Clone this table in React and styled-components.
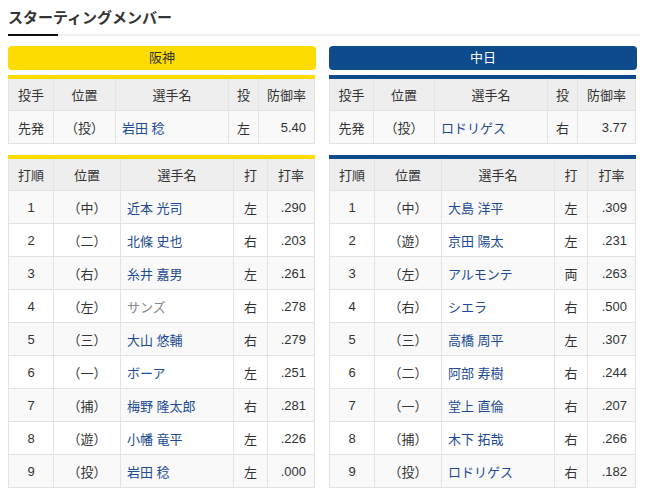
import React from "react";
import styled, { createGlobalStyle } from "styled-components";

const GlobalStyle = createGlobalStyle`
  body {
    margin: 8px;
    background: #ffffff;
    font-family: "Liberation Sans", "Noto Sans CJK JP", sans-serif;
    color: #333333;
  }
`;

const TEAMS = [
  {
    name: "阪神",
    bg: "#ffdc00",
    fg: "#333333",
    pitcher: { role: "先発", pos: "（投）", name: "岩田 稔", hand: "左", era: "5.40" },
    pitcherCols: [45, 62, 113, 30, 56],
    batterCols: [45, 67, 113, 34, 47],
    batters: [
      ["1", "（中）", "近本 光司", "左", ".290"],
      ["2", "（二）", "北條 史也", "右", ".203"],
      ["3", "（右）", "糸井 嘉男", "左", ".261"],
      ["4", "（左）", "サンズ", "右", ".278", true],
      ["5", "（三）", "大山 悠輔", "右", ".279"],
      ["6", "（一）", "ボーア", "左", ".251"],
      ["7", "（捕）", "梅野 隆太郎", "右", ".281"],
      ["8", "（遊）", "小幡 竜平", "左", ".226"],
      ["9", "（投）", "岩田 稔", "左", ".000"],
    ],
  },
  {
    name: "中日",
    bg: "#0e4b8c",
    fg: "#ffffff",
    pitcher: { role: "先発", pos: "（投）", name: "ロドリゲス", hand: "右", era: "3.77" },
    pitcherCols: [44, 61, 113, 30, 58],
    batterCols: [45, 67, 113, 33, 48],
    batters: [
      ["1", "（中）", "大島 洋平", "左", ".309"],
      ["2", "（遊）", "京田 陽太", "左", ".231"],
      ["3", "（左）", "アルモンテ", "両", ".263"],
      ["4", "（右）", "シエラ", "右", ".500"],
      ["5", "（三）", "高橋 周平", "左", ".307"],
      ["6", "（二）", "阿部 寿樹", "右", ".244"],
      ["7", "（一）", "堂上 直倫", "右", ".207"],
      ["8", "（捕）", "木下 拓哉", "右", ".266"],
      ["9", "（投）", "ロドリゲス", "右", ".182"],
    ],
  },
];

const Heading = styled.h2`
  margin: 0;
  padding: 1px 0 8px;
  font-size: 15px;
  line-height: 17px;
  font-weight: bold;
  color: #333333;
  border-bottom: 2px solid #f0f0f0;
  position: relative;

  &::after {
    content: "";
    position: absolute;
    left: 0;
    bottom: -2px;
    width: 50px;
    height: 2px;
    background: #111111;
  }
`;

const Columns = styled.div`
  display: flex;
  gap: 13px;
  margin-top: 10px;
`;

const Column = styled.div`
  width: 308px;
  display: flex;
  flex-direction: column;
`;

const TeamBar = styled.div`
  height: 24px;
  line-height: 24px;
  border-radius: 4px;
  background: ${(p) => p.$bg};
  color: ${(p) => p.$fg};
  font-size: 13px;
  text-align: center;
`;

const Table = styled.table`
  width: 306px;
  border-collapse: collapse;
  table-layout: fixed;
  margin-top: ${(p) => p.$top}px;
  border-top: 4px solid ${(p) => p.$line};
  font-size: 13px;
`;

const Th = styled.th`
  height: 31px;
  padding: 0;
  background: #eeeeee;
  font-weight: normal;
  color: #333333;
  text-align: center;
  border-left: 1px solid #e3e3e3;
  border-right: 1px solid #e3e3e3;
  border-bottom: 1px solid #e3e3e3;
`;

const Row = styled.tr`
  background: ${(p) => (p.$odd ? "#f9f9f9" : "#ffffff")};
`;

const Td = styled.td`
  height: 32px;
  padding: 0 ${(p) => (p.$align === "right" ? "8px" : "6px")} 0 6px;
  text-align: ${(p) => p.$align || "center"};
  border: 1px solid #e3e3e3;
  border-top: none;
  white-space: nowrap;
`;

const PlayerLink = styled.span`
  color: ${(p) => (p.$plain ? "#888888" : "#1d4b94")};
`;

const Cols = ({ widths }) => (
  <colgroup>
    {widths.map((w, i) => (
      <col key={i} style={{ width: w }} />
    ))}
  </colgroup>
);

const TeamColumn = ({ team }) => (
  <Column>
    <TeamBar $bg={team.bg} $fg={team.fg}>
      {team.name}
    </TeamBar>
    <Table $top={5} $line={team.bg}>
      <Cols widths={team.pitcherCols} />
      <thead>
        <tr>
          <Th>投手</Th>
          <Th>位置</Th>
          <Th>選手名</Th>
          <Th>投</Th>
          <Th>防御率</Th>
        </tr>
      </thead>
      <tbody>
        <Row $odd>
          <Td>{team.pitcher.role}</Td>
          <Td>{team.pitcher.pos}</Td>
          <Td $align="left">
            <PlayerLink>{team.pitcher.name}</PlayerLink>
          </Td>
          <Td>{team.pitcher.hand}</Td>
          <Td $align="right">{team.pitcher.era}</Td>
        </Row>
      </tbody>
    </Table>
    <Table $top={11} $line={team.bg}>
      <Cols widths={team.batterCols} />
      <thead>
        <tr>
          <Th>打順</Th>
          <Th>位置</Th>
          <Th>選手名</Th>
          <Th>打</Th>
          <Th>打率</Th>
        </tr>
      </thead>
      <tbody>
        {team.batters.map((b, i) => (
          <Row key={i} $odd={i % 2 === 0}>
            <Td>{b[0]}</Td>
            <Td>{b[1]}</Td>
            <Td $align="left">
              <PlayerLink $plain={b[5]}>{b[2]}</PlayerLink>
            </Td>
            <Td>{b[3]}</Td>
            <Td $align="right">{b[4]}</Td>
          </Row>
        ))}
      </tbody>
    </Table>
  </Column>
);

const App = () => (
  <>
    <GlobalStyle />
    <Heading>スターティングメンバー</Heading>
    <Columns>
      {TEAMS.map((t) => (
        <TeamColumn key={t.name} team={t} />
      ))}
    </Columns>
  </>
);

export default App;
